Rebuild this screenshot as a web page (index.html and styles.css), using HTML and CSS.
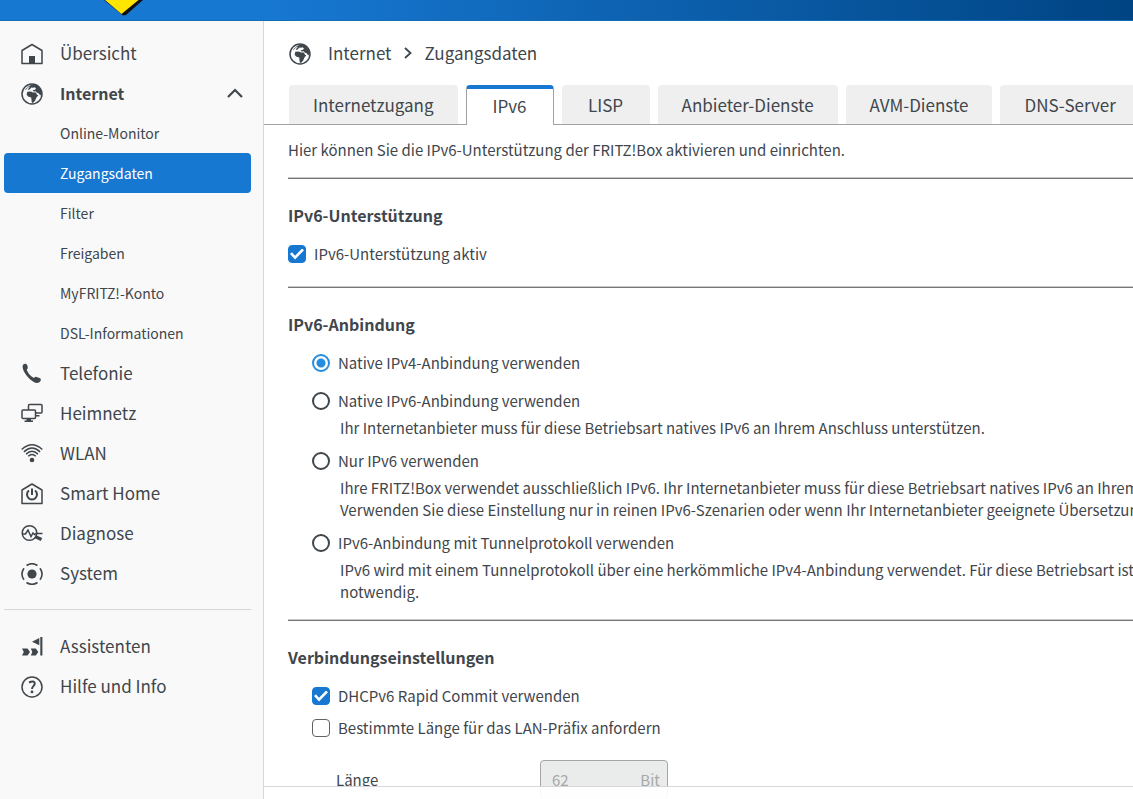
FILE: index.html
```html
<!DOCTYPE html>
<html lang="de">
<head>
<meta charset="utf-8">
<meta name="viewport" content="width=device-width, initial-scale=1">
<title>FRITZ!Box – Zugangsdaten</title>
<link rel="stylesheet" href="styles.css">
</head>
<body>
<svg class="sprite" aria-hidden="true">
  <symbol id="globe" viewBox="0 0 22 22">
    <circle cx="11" cy="11" r="10" fill="none" stroke="currentColor" stroke-width="1.5"/>
    <path fill="currentColor" d="M4 6.500 7.800 3.200 10.500 1.800 13 1.200C17 2 20.500 5.600 21 10.200L19.400 12.600 17.600 10.200 15.600 9.400 14.800 8.300 12.400 8.600 11.600 7.600 14 6.800 15 5.600 13.600 4.300 11.800 4.800 10.400 4.600 8.600 6.600 6.800 7 7.600 5.200 9.400 3.400 7 4.400 4.800 6.800Z"/>
    <path fill="currentColor" d="M6.300 8.800 9.800 8.400 12 9.400 14.800 9.600 16.200 12 17.400 12.200 15.400 14.600 14.200 17.400 12 20 10.800 19.400 10.200 14.400 7 13.600 5.600 11.400Z"/>
  </symbol>
</svg>

<header class="topbar">
  <svg class="logo" viewBox="0 0 44 22" role="img" aria-label="FRITZ!"><path fill="#111" d="M3 0 22 15.500 25 15 42 0Z"/><path fill="#ffe500" d="M4 0 20.500 14 37.500 0Z"/></svg>
</header>

<div class="layout">
  <nav class="sidebar" aria-label="Menü">
    <ul class="menu">
      <li><a class="item" href="#"><svg class="icon" viewBox="0 0 22 22"><path d="M1 20.500V7.500L11 1.500 21 7.500V20.500Z" fill="none" stroke="currentColor" stroke-width="1.500" stroke-linejoin="round"/><path d="M8 13h6v7.500H8Z" fill="currentColor"/></svg>Übersicht</a></li>
      <li>
        <a class="item item-open" href="#"><svg class="icon"><use href="#globe"/></svg>Internet<svg class="caret" viewBox="0 0 16 10"><path d="M1 9 8 2 15 9" fill="none" stroke="currentColor" stroke-width="2.200"/></svg></a>
        <ul class="submenu">
          <li><a class="item" href="#">Online-Monitor</a></li>
          <li><a class="item item-active" href="#" aria-current="page">Zugangsdaten</a></li>
          <li><a class="item" href="#">Filter</a></li>
          <li><a class="item" href="#">Freigaben</a></li>
          <li><a class="item" href="#">MyFRITZ!-Konto</a></li>
          <li><a class="item" href="#">DSL-Informationen</a></li>
        </ul>
      </li>
      <li><a class="item" href="#"><svg class="icon" viewBox="0 0 22 22"><path fill="currentColor" d="M2.500 1.200C4 .2 5.600 .6 6.300 2.200L6.800 4.800C6.900 6 5.600 6.200 5.800 7 7 10.200 9.500 13 12.400 14.800 13.500 15.100 13.700 13.800 14.900 13.800L18.500 15C20 15.700 20.200 16.600 19.600 17.800 18.200 20.300 15.300 20.600 12.800 19 8 16.100 3.600 11 2 6 1.400 4 1.500 2.200 2.500 1.200Z"/></svg>Telefonie</a></li>
      <li><a class="item" href="#"><svg class="icon" viewBox="0 0 22 22"><g fill="none" stroke="currentColor" stroke-width="1.500" stroke-linejoin="round"><path d="M7.500 7V2.500Q7.500 1.500 8.500 1.500H20Q21 1.500 21 2.500V9Q21 10 20 10H15"/><rect x="1" y="7" width="13.500" height="8.500" rx="1"/><path d="M3.500 18.200h8.500M5.500 16.800h4.500M7.800 15.500v2.500M15 12.800h3.500"/></g></svg>Heimnetz</a></li>
      <li><a class="item" href="#"><svg class="icon" viewBox="0 0 22 22"><g fill="none" stroke="currentColor" stroke-width="1.500"><path d="M.7 6.500Q11-3 21.300 6.500M2.900 8.900Q11 1.200 19.100 8.900M5.100 11.100Q11 5.400 16.900 11.100M7.200 13.200Q11 9.700 14.800 13.200"/></g><circle cx="11" cy="17" r="2.300" fill="currentColor"/></svg>WLAN</a></li>
      <li><a class="item" href="#"><svg class="icon" viewBox="0 0 22 22"><g fill="none" stroke="currentColor"><path d="M1 20.500V7L11 1 21 7V20.500Z" stroke-width="1.500" stroke-linejoin="round"/><path d="M8 7.500A5 5 0 1 0 14 7.500M11 5.500V12" stroke-width="2"/></g></svg>Smart Home</a></li>
      <li><a class="item" href="#"><svg class="icon" viewBox="0 0 22 22"><g fill="none" stroke="currentColor" stroke-width="1.500"><circle cx="8.500" cy="10" r="7.300"/><path d="M1 11H4.500L7 7 10 13.500 12 10 13.500 11.500 15 10.500H21.500"/><path d="M14 13.500 20.500 16.500" stroke-width="3.200"/></g></svg>Diagnose</a></li>
      <li><a class="item" href="#"><svg class="icon" viewBox="0 0 22 22"><circle cx="11" cy="11" r="4.600" fill="currentColor"/><path d="M5.500 2.500A10 10 0 0 1 16.500 2.500M19 5.200A10 10 0 0 1 19 16.800M16.500 19.500A10 10 0 0 1 5.500 19.500M3 16.800A10 10 0 0 1 3 5.200" fill="none" stroke="currentColor" stroke-width="1.600"/></svg>System</a></li>
    </ul>
    <ul class="menu menu-extra">
      <li><a class="item" href="#"><svg class="icon" viewBox="0 0 22 22"><g fill="currentColor"><path d="M19.300 1H21.400V19.500H19.300ZM18.300 2V9.200L11 5.800ZM1 12.500H6.500L9 16 6.500 19.500H1L2.800 16ZM9.800 12.500H14.800L17.300 16 14.800 19.500H9.800L11.300 16Z"/></g></svg>Assistenten</a></li>
      <li><a class="item" href="#"><svg class="icon" viewBox="0 0 22 22"><g fill="none" stroke="currentColor"><circle cx="11" cy="11" r="10" stroke-width="1.500"/><path d="M8 6.500Q13.500 3.800 13.800 7.600C13.800 9.800 11 10 11 13" stroke-width="2"/></g><circle cx="11" cy="15.900" r="1.400" fill="currentColor"/></svg>Hilfe und Info</a></li>
    </ul>
  </nav>

  <main class="main">
    <div class="crumbs"><svg class="icon"><use href="#globe"/></svg><span>Internet</span><svg class="crumb-arrow" viewBox="0 0 8 12"><path d="M1 1 6.500 6 1 11" fill="none" stroke="currentColor" stroke-width="1.800"/></svg><span>Zugangsdaten</span></div>
    <div class="tabs">
      <a class="tab" href="#">Internetzugang</a>
      <a class="tab tab-active" href="#" aria-current="page">IPv6</a>
      <a class="tab" href="#">LISP</a>
      <a class="tab" href="#">Anbieter-Dienste</a>
      <a class="tab" href="#">AVM-Dienste</a>
      <a class="tab" href="#">DNS-Server</a>
    </div>
    <form class="content">
      <p class="intro">Hier können Sie die IPv6-Unterstützung der FRITZ!Box aktivieren und einrichten.</p>
      <section class="section">
        <h2>IPv6-Unterstützung</h2>
        <label class="choice"><input type="checkbox" checked>IPv6-Unterstützung aktiv</label>
      </section>
      <section class="section">
        <h2>IPv6-Anbindung</h2>
        <div class="options">
          <label class="choice choice-first"><input type="radio" name="mode" checked>Native IPv4-Anbindung verwenden</label>
          <label class="choice"><input type="radio" name="mode">Native IPv6-Anbindung verwenden</label>
          <p class="hint">Ihr Internetanbieter muss für diese Betriebsart natives IPv6 an Ihrem Anschluss unterstützen.</p>
          <label class="choice"><input type="radio" name="mode">Nur IPv6 verwenden</label>
          <p class="hint">Ihre FRITZ!Box verwendet ausschließlich IPv6. Ihr Internetanbieter muss für diese Betriebsart natives IPv6 an Ihrem<br>Verwenden Sie diese Einstellung nur in reinen IPv6-Szenarien oder wenn Ihr Internetanbieter geeignete Übersetzung</p>
          <label class="choice"><input type="radio" name="mode">IPv6-Anbindung mit Tunnelprotokoll verwenden</label>
          <p class="hint">IPv6 wird mit einem Tunnelprotokoll über eine herkömmliche IPv4-Anbindung verwendet. Für diese Betriebsart ist k<br>notwendig.</p>
        </div>
      </section>
      <section class="section">
        <h2>Verbindungseinstellungen</h2>
        <div class="checks">
          <label class="choice"><input type="checkbox" checked>DHCPv6 Rapid Commit verwenden</label>
          <label class="choice"><input type="checkbox">Bestimmte Länge für das LAN-Präfix anfordern</label>
        </div>
        <div class="field">
          <label for="prefix">Länge</label>
          <div class="unit-input"><input id="prefix" type="text" value="62" disabled><span>Bit</span></div>
        </div>
      </section>
    </form>
    <footer class="actions"></footer>
  </main>
</div>
</body>
</html>
```
FILE: styles.css
```css
* { box-sizing: border-box; }

body {
  margin: 0;
  height: 100vh;
  display: flex;
  flex-direction: column;
  overflow: hidden;
  background: #fff;
  color: #3f464c;
  font-family: "Noto Sans CJK SC", "Noto Sans", sans-serif;
  font-size: 15px;
  line-height: 22px;
}

a { color: inherit; text-decoration: none; }
ul { list-style: none; margin: 0; padding: 0; }
p, h2 { margin: 0; }
.sprite { position: absolute; width: 0; height: 0; }
.icon { width: 22px; height: 22px; flex: none; margin-top: 2px; }

.topbar {
  flex: none;
  height: 21px;
  padding-left: 101px;
  background: linear-gradient(90deg, #1778d2 264px, #004483);
  border-bottom: 1px solid #176bb9;
}
.logo { display: block; width: 44px; height: 22px; }

.layout {
  flex: 1;
  min-height: 0;
  display: grid;
  grid-template-columns: 264px minmax(0, 1fr);
}

.sidebar {
  padding: 12px 12px 0 4px;
  background: #f9f9f9;
  border-right: 1px solid #d6d7d8;
}
.item {
  display: flex;
  align-items: center;
  gap: 17px;
  height: 40px;
  padding: 0 8px 1px 17px;
  border-radius: 4px;
  font-size: 17px;
}
.item-open { font-size: 16px; font-weight: bold; }
.caret { width: 16px; height: 10px; margin-left: auto; }
.submenu .item { padding: 0 8px 0 56px; font-size: 14px; }
.submenu .item-active { background: #1778d2; color: #fff; }
.menu-extra {
  margin-top: 16px;
  padding-top: 16px;
  border-top: 1px solid #d6d7d8;
}

.main {
  position: relative;
  min-width: 0;
  overflow: hidden;
  white-space: nowrap;
}
.crumbs {
  display: flex;
  align-items: center;
  height: 64px;
  padding-left: 25px;
  font-size: 17px;
}
.crumbs .icon { margin-right: 17px; }
.crumb-arrow { width: 8px; height: 12px; margin: 0 13px 0 12px; }

.tabs {
  display: flex;
  gap: 8px;
  height: 40px;
  padding-left: 25px;
  border-bottom: 1px solid #9fa1a3;
}
.tab {
  flex: none;
  display: flex;
  align-items: center;
  justify-content: center;
  min-width: 88px;
  padding: 1px 24px 0;
  border-radius: 4px 4px 0 0;
  background: #efefef;
  font-size: 17px;
}
.tab-active {
  height: 40px;
  padding: 0 24px 2px;
  border: 1px solid #9fa1a3;
  border-top: 4px solid #1778d2;
  border-bottom: 0;
  background: #fff;
}

.content { padding: 14px 0 0 24px; }
.intro { padding-bottom: 16px; }
.section {
  padding: 26px 0 21px;
  border-top: 1px solid #c8c8c8;
  box-shadow: inset 0 1px #777;
}
.section:has(.options) { padding-bottom: 16px; }
h2 { margin-bottom: 17px; font-size: 16px; line-height: 22px; }
.choice { display: flex; align-items: center; gap: 8px; }
.options, .checks { padding-left: 24px; }
.choice-first { margin-bottom: 16px; }
.hint { margin: 5px 0 11px; padding-left: 28px; }
.hint:last-child { margin-bottom: 0; }
.checks { display: grid; gap: 10px; }

.choice input {
  appearance: none;
  flex: none;
  width: 18px;
  height: 18px;
  margin: 0;
  border: 1px solid #5d6368;
  border-radius: 4px;
  background: #fff;
}
.choice input[type="radio"] { border: 2px solid #3f464c; border-radius: 50%; }
.choice input[type="radio"]:checked {
  border-color: #258de0;
  background: radial-gradient(circle, #258de0 4px, #fff 5px);
}
.choice input[type="checkbox"]:checked {
  display: grid;
  place-items: center;
  border-color: #1778d2;
  background: #1778d2;
}
.choice input[type="checkbox"]:checked::before {
  content: "";
  width: 14px;
  height: 11px;
  background: #fff;
  clip-path: polygon(0 50%, 14% 34%, 36% 66%, 86% 0, 100% 16%, 36% 100%);
}

.field {
  display: grid;
  grid-template-columns: 204px 128px;
  align-items: center;
  margin-top: 21px;
  padding-left: 48px;
}
.unit-input {
  display: flex;
  align-items: center;
  height: 40px;
  padding: 0 7px 0 11px;
  border: 1px solid #a2a6a6;
  border-radius: 4px;
  background: #eaeceb;
  color: #a6a9aa;
}
.unit-input input {
  flex: 1;
  min-width: 0;
  padding: 0;
  border: 0;
  background: none;
  color: inherit;
  font: inherit;
}

.actions {
  position: absolute;
  inset: auto 0 0;
  height: 13px;
  border-top: 1px solid #d6d7d8;
  background: rgb(255 255 255 / 92%);
}
```
